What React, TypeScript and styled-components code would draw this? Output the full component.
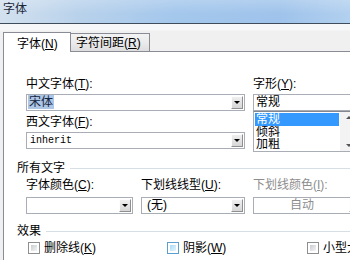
import React from 'react';
import styled, { createGlobalStyle } from 'styled-components';

const GlobalStyle = createGlobalStyle`
  html, body {
    margin: 0;
    padding: 0;
    background: #f0f0f0;
  }
  body {
    font-family: "Liberation Sans", "Noto Sans CJK SC", sans-serif;
    font-size: 12px;
    color: #000;
  }
`;

const Window = styled.div`
  width: 350px;
  height: 260px;
  overflow: hidden;
  display: flex;
  flex-direction: column;
  background: #f0f0f0;
`;

const TitleBar = styled.div`
  flex: none;
  height: 24px;
  box-sizing: border-box;
  padding: 2px 0 0 3px;
  line-height: 15px;
  color: #1b2738;
  border-bottom: 1px solid #3f4c5c;
  background:
    linear-gradient(180deg, rgba(255, 255, 255, 0.2) 0%, rgba(255, 255, 255, 0) 60%),
    linear-gradient(90deg, #d3e1ef 0%, #b9d2eb 22%, #a4c7ec 50%, #9fc3eb 80%, #b2d0ef 100%);
`;

const Body = styled.div`
  flex: 1;
  display: flex;
  flex-direction: column;
  padding: 8px 0 0 3px;
  background: linear-gradient(180deg, #f6f7f9 0px, #f6f7f9 6px, #f0f0f0 7px);
`;

const TabStrip = styled.div`
  flex: none;
  height: 19px;
  display: flex;
  align-items: flex-end;
`;

const Tab = styled.div<{ $active?: boolean }>`
  box-sizing: border-box;
  white-space: nowrap;
  line-height: 14px;
  border: 1px solid #898c95;
  border-bottom: none;
  ${(p) =>
    p.$active
      ? `
    width: 68px;
    height: 20px;
    margin-bottom: -1px;
    padding: 4px 0 0 13px;
    background: #fff;
    position: relative;
    z-index: 1;
  `
      : `
    width: 79px;
    height: 18px;
    border-left: none;
    padding: 2px 0 0 5px;
    background: linear-gradient(180deg, #f3f3f3 0%, #ebebeb 50%, #dedede 100%);
  `}
`;

const Panel = styled.div`
  flex: 1;
  background: #fff;
  border-top: 1px solid #898c95;
  border-left: 1px solid #898c95;
  padding-top: 25px;
  display: flex;
  flex-direction: column;
`;

const TopRow = styled.div`
  display: grid;
  grid-template-columns: 219px 110px;
  column-gap: 8px;
  padding-left: 22px;
`;

const Column = styled.div`
  display: flex;
  flex-direction: column;
`;

const Label = styled.div<{ $disabled?: boolean; $gap?: number }>`
  height: 14px;
  line-height: 14px;
  white-space: nowrap;
  margin-bottom: ${(p) => p.$gap ?? 3}px;
  color: ${(p) => (p.$disabled ? '#8d8d8d' : '#000')};
`;

const Combo = styled.div<{ $disabled?: boolean }>`
  height: 17px;
  box-sizing: border-box;
  border: 1px solid #a9aeb6;
  background: #fff;
  display: flex;
  align-items: center;
  padding-left: 1px;
  color: ${(p) => (p.$disabled ? '#8d8d8d' : '#000')};
  line-height: 13px;
  white-space: nowrap;
  overflow: hidden;
`;

const ComboText = styled.span<{ $center?: boolean; $mono?: boolean; $flush?: boolean }>`
  flex: 1;
  padding-left: ${(p) => (p.$center || p.$flush ? 0 : 4)}px;
  text-align: ${(p) => (p.$center ? 'center' : 'left')};
  ${(p) =>
    p.$mono
      ? `font-family: "Liberation Mono", "DejaVu Sans Mono", monospace; font-size: 10px; padding-left: 2px;`
      : ''}
`;

const Selected = styled.span`
  background: #adc6e5;
  color: #15243f;
  padding: 0 1px;
`;

const DropButton = styled.div<{ $disabled?: boolean }>`
  flex: none;
  width: 12px;
  height: 13px;
  box-sizing: border-box;
  margin-right: 1px;
  border: 1px solid;
  border-color: #fdfdfd #8f8f8f #8f8f8f #fdfdfd;
  background: linear-gradient(180deg, #efefef, #d6d6d6);
  display: flex;
  align-items: center;
  justify-content: center;

  &::after {
    content: '';
    width: 0;
    height: 0;
    border-left: 3px solid transparent;
    border-right: 3px solid transparent;
    border-top: 3px solid ${(p) => (p.$disabled ? '#a8a8a8' : '#000')};
  }
`;

const StyleInput = styled.div`
  height: 17px;
  box-sizing: border-box;
  border: 1px solid #a9aeb6;
  line-height: 15px;
  padding-left: 2px;
  white-space: nowrap;
`;

const ListBox = styled.div`
  width: 105px;
  height: 41px;
  box-sizing: border-box;
  border: 1px solid #a9aeb6;
  border-top-color: #828790;
  display: flex;
  overflow: hidden;
`;

const ListItems = styled.div`
  flex: 1;
  padding: 1px 1px 0 1px;
  display: flex;
  flex-direction: column;
`;

const ListItem = styled.div<{ $selected?: boolean }>`
  height: 13px;
  line-height: 13px;
  padding-left: 1px;
  white-space: nowrap;
  overflow: hidden;
  background: ${(p) => (p.$selected ? '#3399ff' : 'transparent')};
  color: ${(p) => (p.$selected ? '#fff' : '#000')};
`;

const ScrollBar = styled.div`
  width: 17px;
  flex: none;
  background: #f3f3f3;
  display: flex;
  flex-direction: column;
  justify-content: space-between;
  align-items: center;
  padding: 4px 0;
  box-sizing: border-box;
`;

const Arrow = styled.div<{ $up?: boolean }>`
  width: 0;
  height: 0;
  border-left: 3px solid transparent;
  border-right: 3px solid transparent;
  ${(p) => (p.$up ? 'border-bottom: 3px solid #555;' : 'border-top: 3px solid #555;')}
`;

const Group = styled.div<{ $mt: number }>`
  display: flex;
  align-items: center;
  height: 14px;
  line-height: 14px;
  padding-left: 13px;
  margin-top: ${(p) => p.$mt}px;
  white-space: nowrap;
`;

const GroupLine = styled.div`
  flex: 1;
  height: 1px;
  margin-left: 5px;
  background: #d5dfe5;
`;

const ThreeRow = styled.div`
  display: grid;
  grid-template-columns: 107px 104px 110px;
  column-gap: 8px;
  padding-left: 22px;
  margin-top: 3px;
`;

const CheckRow = styled.div`
  display: grid;
  grid-template-columns: 139px 140px auto;
  padding-left: 24px;
  margin-top: 3px;
  height: 14px;
  line-height: 14px;
  white-space: nowrap;
`;

const CheckItem = styled.div`
  display: flex;
  align-items: center;
  gap: 4px;
`;

const CheckBox = styled.span<{ $hot?: boolean }>`
  flex: none;
  width: 12px;
  height: 12px;
  box-sizing: border-box;
  border: 1px solid ${(p) => (p.$hot ? '#5b9fd0' : '#8e8f8f')};
  padding: 2px;
  background: #fff;
  display: inline-flex;

  &::after {
    content: '';
    flex: 1;
    background: ${(p) =>
      p.$hot
        ? 'linear-gradient(135deg, #a9dbf6, #e3f4fd)'
        : 'linear-gradient(135deg, #c9ccd1, #f4f4f4)'};
  }
`;

const Key = ({ k }: { k: string }) => (
  <>
    (<u>{k}</u>)
  </>
);

export default function App() {
  return (
    <>
      <GlobalStyle />
      <Window>
        <TitleBar>字体</TitleBar>
        <Body>
          <TabStrip>
            <Tab $active>
              字体<Key k="N" />
            </Tab>
            <Tab>
              字符间距<Key k="R" />
            </Tab>
          </TabStrip>
          <Panel>
            <TopRow>
              <Column>
                <Label>
                  中文字体<Key k="T" />:
                </Label>
                <Combo>
                  <ComboText $flush>
                    <Selected>宋体</Selected>
                  </ComboText>
                  <DropButton />
                </Combo>
                <Label style={{ marginTop: 4 }}>
                  西文字体<Key k="F" />:
                </Label>
                <Combo>
                  <ComboText $mono>inherit</ComboText>
                  <DropButton />
                </Combo>
              </Column>
              <Column>
                <Label>
                  字形<Key k="Y" />:
                </Label>
                <StyleInput>常规</StyleInput>
                <ListBox>
                  <ListItems>
                    <ListItem $selected>常规</ListItem>
                    <ListItem>倾斜</ListItem>
                    <ListItem>加粗</ListItem>
                  </ListItems>
                  <ScrollBar>
                    <Arrow $up />
                    <Arrow />
                  </ScrollBar>
                </ListBox>
              </Column>
            </TopRow>

            <Group $mt={9}>
              <span>所有文字</span>
              <GroupLine />
            </Group>
            <ThreeRow>
              <Column>
                <Label $gap={5}>
                  字体颜色<Key k="C" />:
                </Label>
                <Combo>
                  <ComboText />
                  <DropButton />
                </Combo>
              </Column>
              <Column>
                <Label $gap={5}>
                  下划线线型<Key k="U" />:
                </Label>
                <Combo>
                  <ComboText>(无)</ComboText>
                  <DropButton />
                </Combo>
              </Column>
              <Column>
                <Label $gap={5} $disabled>
                  下划线颜色<Key k="I" />:
                </Label>
                <Combo $disabled>
                  <ComboText $center>自动</ComboText>
                  <DropButton $disabled />
                </Combo>
              </Column>
            </ThreeRow>

            <Group $mt={10}>
              <span>效果</span>
              <GroupLine />
            </Group>
            <CheckRow>
              <CheckItem>
                <CheckBox />
                <span>
                  删除线<Key k="K" />
                </span>
              </CheckItem>
              <CheckItem>
                <CheckBox $hot />
                <span>
                  阴影<Key k="W" />
                </span>
              </CheckItem>
              <CheckItem>
                <CheckBox />
                <span>
                  小型大写字母<Key k="M" />
                </span>
              </CheckItem>
            </CheckRow>
          </Panel>
        </Body>
      </Window>
    </>
  );
}
